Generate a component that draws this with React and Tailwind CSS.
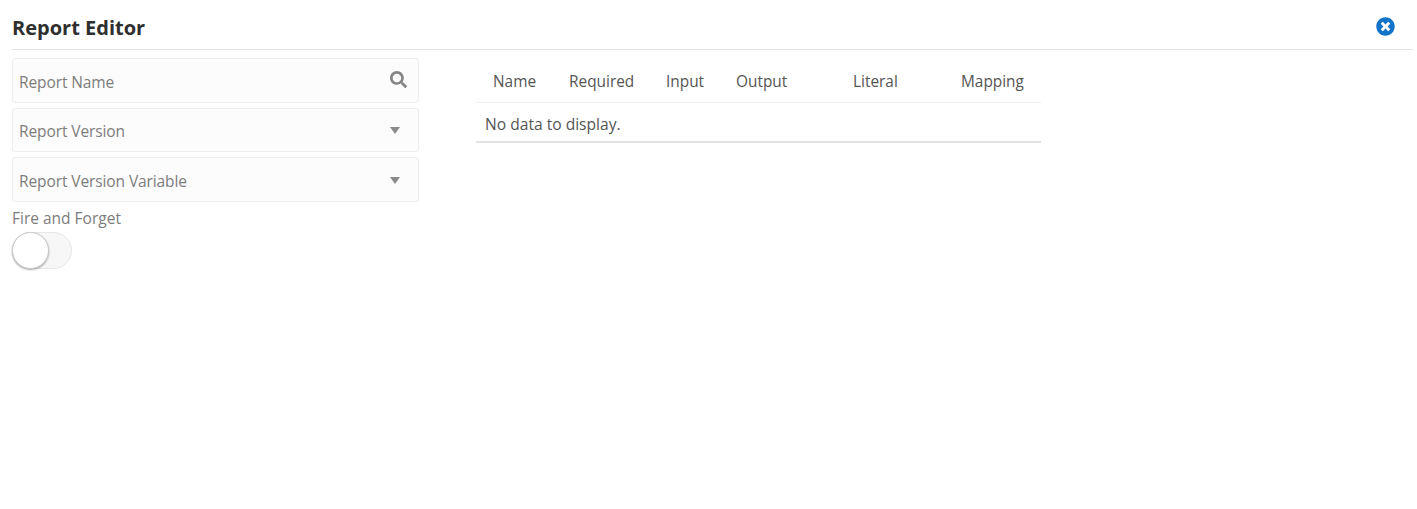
import { FaSearch, FaTimesCircle } from "react-icons/fa";

const columns = [
  { name: "Name", width: "w-[76px]" },
  { name: "Required", width: "w-[97px]" },
  { name: "Input", width: "w-[70px]" },
  { name: "Output", width: "w-[117px]" },
  { name: "Literal", width: "w-[108px]" },
  { name: "Mapping", width: "w-[80px]" },
];

function Field({ label, icon, height = "h-[45px]" }) {
  return (
    <div className={`flex ${height} items-center justify-between rounded-[3px] border border-[#eeeeee] bg-[#fcfcfc] pl-[6px] pr-[11px]`}>
      <span className="pt-[4px] text-[15.5px] tracking-[-0.1px] text-[#7d7d7d]">{label}</span>
      {icon}
    </div>
  );
}

function Caret() {
  return <div className="mr-[7px] mt-[1px] h-0 w-0 border-x-[5.5px] border-t-[7px] border-x-transparent border-t-[#8a8a8a]" />;
}

export default function App() {
  return (
    <div className="h-[509px] bg-white pl-3 pr-1 font-['Open_Sans',sans-serif]">
      <header className="flex h-[50px] items-center justify-between border-b border-[#e5e5e5] pr-[18px] pt-[6px]">
        <h1 className="text-[20px] font-bold text-[#2f2f2f]">Report Editor</h1>
        <FaTimesCircle className="mb-[3px] text-[19px] text-[#1273c9]" />
      </header>

      <div className="flex pt-2">
        <div className="w-[407px]">
          <div className="flex flex-col gap-[5px]">
            <Field label="Report Name" icon={<FaSearch className="mb-[3px] text-[17px] text-[#858585]" />} />
            <Field label="Report Version" height="h-[44px]" icon={<Caret />} />
            <Field label="Report Version Variable" icon={<Caret />} />
          </div>
          <div className="mt-[4px] text-[15.5px] leading-[24px] text-[#7d7d7d]">Fire and Forget</div>
          <div className="mt-[2px] h-[37px] w-[60px] rounded-full border border-[#e6e6e6] bg-[#f7f7f7]">
            <div className="-ml-px -mt-px h-[37px] w-[37px] rounded-full border border-[#c9c9c9] bg-white shadow-[0_1px_2px_rgba(0,0,0,0.35)]" />
          </div>
        </div>

        <div className="ml-[57px] w-[565px]">
          <div className="flex h-[45px] items-center border-b border-[#efefef] pl-[17px] pt-[4px] text-[15.4px] text-[#555555]">
            {columns.map((col) => (
              <div key={col.name} className={`${col.width} shrink-0`}>
                {col.name}
              </div>
            ))}
          </div>
          <div className="flex h-[40px] items-center border-b-2 border-[#e2e2e2] pl-[9px] pt-[5px] text-[15.6px] text-[#555555]">
            No data to display.
          </div>
        </div>
      </div>
    </div>
  );
}
